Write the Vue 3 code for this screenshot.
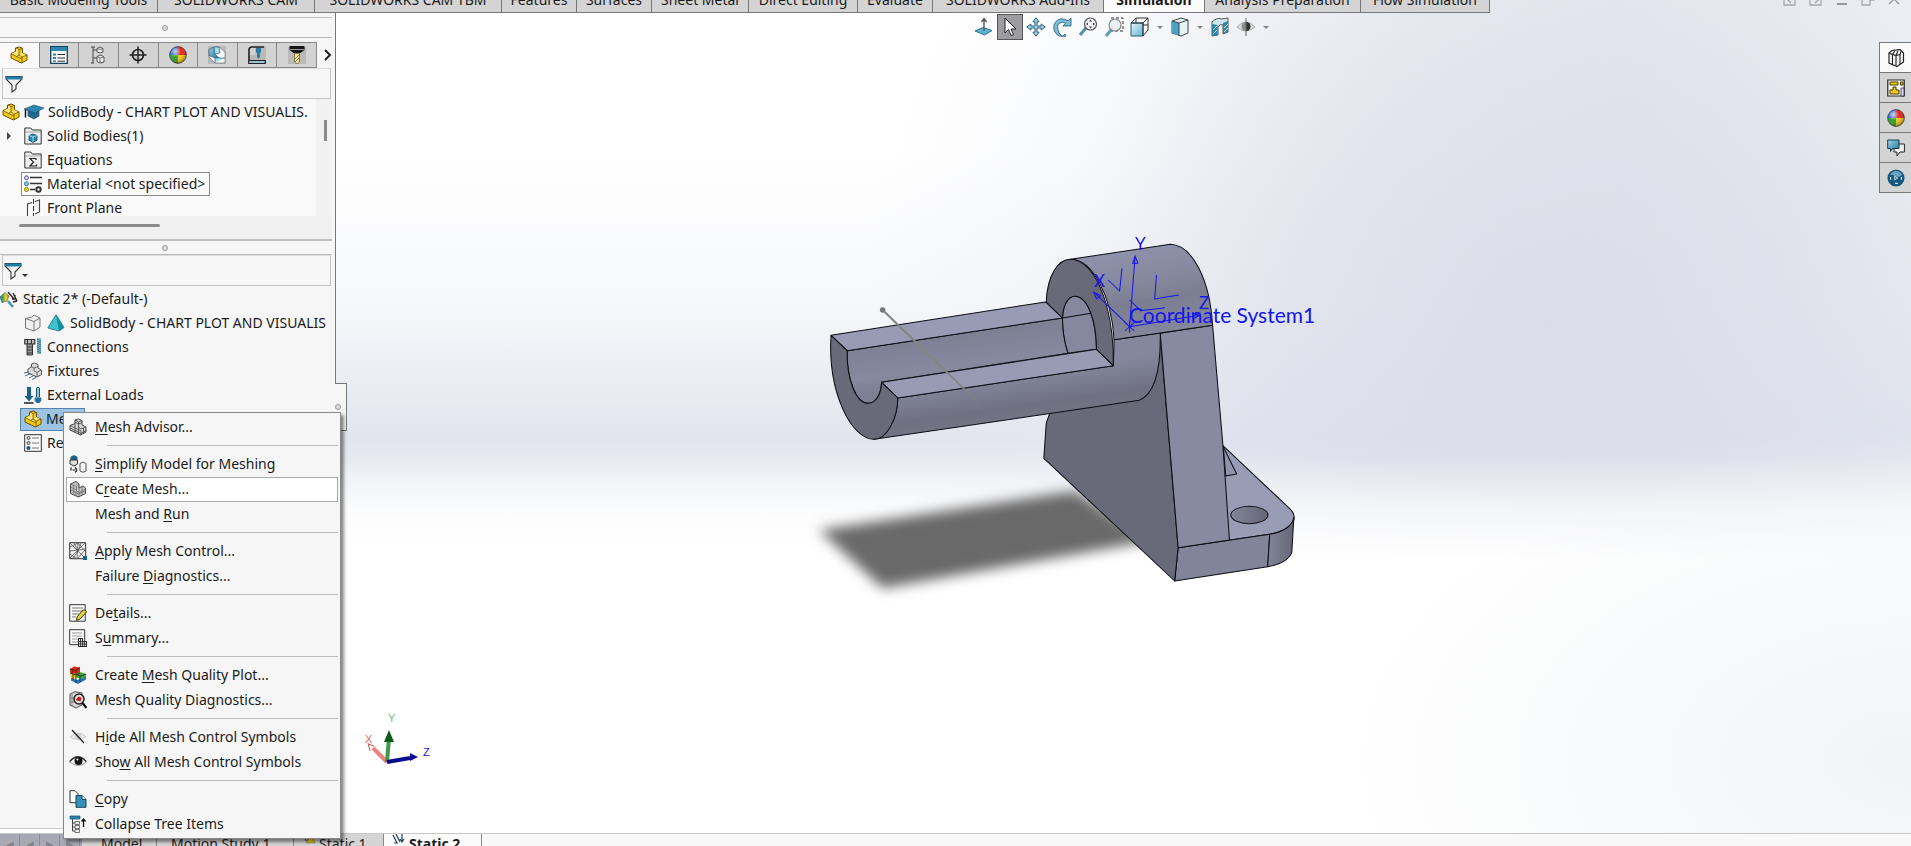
<script setup>
const ribbon = [
  'Basic Modeling Tools', 'SOLIDWORKS CAM', 'SOLIDWORKS CAM TBM', 'Features', 'Surfaces', 'Sheet Metal',
  'Direct Editing', 'Evaluate', 'SOLIDWORKS Add-Ins', 'Simulation', 'Analysis Preparation', 'Flow Simulation',
]
const managers = [
  ['part', 'Feature tree'], ['props', 'Properties'], ['config', 'Configurations'], ['target', 'Dimensions'],
  ['ball', 'Display'], ['camcube', 'CAM features'], ['machine', 'CAM operations'], ['tool', 'CAM tools'],
]
const hud = [
  ['normal', 'Normal to'], ['cursor', 'Select'], ['pan', 'Pan'], ['rotate', 'Rotate'], ['zoomfit', 'Zoom to fit'],
  ['zoomarea', 'Zoom to area'], ['orient', 'View orientation', true], ['style', 'Display style', true],
  ['section', 'Section view'], ['eye2', 'Hide or show items', true],
]
const windowButtons = [['winleft', 'Dock left'], ['winright', 'Dock right'], ['winmin', 'Minimize'], ['winrest', 'Restore'], ['winclose', 'Close']]
const taskPane = [['books', 'Design library'], ['palette', 'View palette'], ['ball', 'Appearances'], ['chat', 'Forum'], ['globe', 'Resources']]
const menu = [
  [['advisor', '', 'M', 'esh Advisor...']],
  [['simplify', '', 'S', 'implify Model for Meshing'], ['mesh', 'C', 'r', 'eate Mesh...'], ['', 'Mesh and ', 'R', 'un']],
  [['control', '', 'A', 'pply Mesh Control...'], ['', 'Failure ', 'D', 'iagnostics...']],
  [['details', 'De', 't', 'ails...'], ['summary', 'S', 'u', 'mmary...']],
  [['plot', 'Create ', 'M', 'esh Quality Plot...'], ['diag', 'Mesh Quality Dia', 'g', 'nostics...']],
  [['hide', 'H', 'i', 'de All Mesh Control Symbols'], ['show', 'Sho', 'w', ' All Mesh Control Symbols']],
  [['copy', '', 'C', 'opy'], ['collapse', 'Collapse Tree Items', '', '']],
]
</script>

<template>
  <div class="app">
    <svg class="defs" aria-hidden="true">
      <defs>
        <linearGradient id="gBlue" x1="0" y1="0" x2="1" y2="1"><stop offset="0" stop-color="#9fd3e8" /><stop offset="1" stop-color="#1f6f96" /></linearGradient>
        <linearGradient id="gPale" x1="0" y1="0" x2="1" y2="1"><stop offset="0" stop-color="#e8f6fb" /><stop offset="1" stop-color="#5fb3d0" /></linearGradient>
        <radialGradient id="gShine" cx=".35" cy=".3" r=".7"><stop offset="0" stop-color="#fff" stop-opacity=".75" /><stop offset=".5" stop-color="#fff" stop-opacity="0" /><stop offset="1" stop-color="#000" stop-opacity=".35" /></radialGradient>
        <linearGradient id="gRain" x1="0" y1="0" x2="1" y2="0"><stop offset="0" stop-color="#2f78c8" /><stop offset=".35" stop-color="#3fae4a" /><stop offset=".65" stop-color="#f3dc2c" /><stop offset="1" stop-color="#e4502a" /></linearGradient>
      </defs>
      <symbol id="i-part" viewBox="0 0 18 18">
        <path d="M1 7.500 5.500 5.500V2L9.500 1 12.500 2.500V7L17 9v5l-5.500 3L1 12z" fill="var(--pa,#f6c915)" stroke="var(--ps,#6e5200)" />
        <path d="M6 2 9 3.500V8.500L6 10 1.500 7.700 6 5.500zM9 8.500 12.500 7 16.500 9.200 12 11.500 6.500 10z" fill="var(--pb,#ffe678)" />
        <path d="M6 2 9 3.500 12.500 2.500M9 3.500V9l3 2 5-2M1 7.500 6.500 10.500 9 9M6.500 10.500 12 13V11M12 13v4" fill="none" stroke="var(--ps,#6e5200)" stroke-width=".8" />
      </symbol>
      <symbol id="i-props" viewBox="0 0 18 18"><path d="M.7.7h16.600v16.600H.7z" fill="#f4f8fa" stroke="#16435c" stroke-width="1.300" /><path d="M1 1h16v4H1z" fill="#2c86b0" /><path d="M3 7.500h3v2H3zm0 3.500h3v2H3zm0 3.500h3v1.500H3z" fill="#2c86b0" /><path d="M7.500 8.500H15M7.500 12H15M7.500 15.200H15" stroke="#333" /></symbol>
      <symbol id="i-config" viewBox="0 0 18 18"><path d="M1 1h4M3 1v16M1 17h3M3 4h4M3 12h4" stroke="#444" fill="none" /><path d="M7 2.500 10 1l3 1.500V6l-3 1-3-1zM7 10.500l4-1.500 3 2v5l-4 1-3-1.500z" fill="#eee" stroke="#555" /><path d="M7 10.500 10 12l4-1M10 12v5M7 2.500l3 1 3-1" stroke="#555" fill="none" stroke-width=".8" /></symbol>
      <symbol id="i-target" viewBox="0 0 18 18"><circle cx="9" cy="9" r="5.500" fill="none" stroke="#222" stroke-width="1.700" /><path d="M9 .5v17M.5 9h17" stroke="#222" stroke-width="1.500" /></symbol>
      <symbol id="i-ball" viewBox="0 0 18 18"><path d="M9 9V.6A8.400 8.400 0 0 1 17.400 9z" fill="#e0261c" /><path d="M9 9h8.400A8.400 8.400 0 0 1 9 17.400z" fill="#f4c61b" /><path d="M9 9v8.400A8.400 8.400 0 0 1 .6 9z" fill="#2ea12f" /><path d="M9 9H.6A8.400 8.400 0 0 1 9 .6z" fill="#2b62d9" /><circle cx="9" cy="9" r="8.400" fill="url(#gShine)" stroke="#333" stroke-width=".7" /></symbol>
      <symbol id="i-camcube" viewBox="0 0 18 18"><path d="M0 0h18v18H0z" fill="#b9b9b9" /><path d="M1 3.500 6 1h5l6 5v11H7l-6-6z" fill="#fff" stroke="#777" stroke-width=".8" /><path d="M1 3.500 6 1v6l5 5H7L1 9.500z" fill="url(#gBlue)" stroke="#35718c" stroke-width=".8" /><path d="M6 1h5l1 6-5 1zM7 17v-5h10" fill="#a9d9ec" stroke="#35718c" stroke-width=".8" /></symbol>
      <symbol id="i-machine" viewBox="0 0 18 18"><path d="M7 0h11v18H0V9h7z" fill="#b9b9b9" /><path d="M16 1H4Q1 1 1 4v10" fill="none" stroke="#222" stroke-width="1.600" /><path d="M8 2h5v4l-1 1v4l-1.500 2L9 11V7L8 6z" fill="#2a7ca5" /><path d="M.8 14.500h16.400v3H.8z" fill="#9cc3d5" stroke="#222" stroke-width="1.200" /></symbol>
      <symbol id="i-tool" viewBox="0 0 18 18"><path d="M0 1h18v17H0z" fill="#b9b9b9" /><path d="M1.500 0h15v4l-4 3h-7l-4-3z" fill="#151515" /><path d="M2 3.500h14" stroke="#bbb" stroke-width=".8" /><path d="M6.500 7.500h5V16l-2.500 2-2.500-2z" fill="#f0e3a2" stroke="#6d6330" stroke-width=".8" /><path d="m7 13 4-4M7 16l4-4" stroke="#8a7b3b" /></symbol>
      <symbol id="i-funnel" viewBox="0 0 18 18"><path d="M1 1.500h16V4l-6 6v4l-4 3v-7L1 4z" fill="#f3f3f3" stroke="#333" stroke-width="1.100" /><path d="M1 1.500h16V4.500H1.500z" fill="#1d7fa9" /></symbol>
      <symbol id="i-cap" viewBox="0 0 20 18"><path d="M4 7v6l6 3 5-3V7z" fill="#22688a" stroke="#173f54" stroke-width=".6" /><path d="M0 6 10 2l10 3-9 5z" fill="#2f86ab" stroke="#1a536e" stroke-width=".6" /><path d="M1.500 6.500v8" stroke="#111" stroke-width="1.500" /></symbol>
      <symbol id="i-folder" viewBox="0 0 18 18"><path d="M.8 3V1h6l1.500 2h8.900v14H.8z" fill="#f0f0f0" stroke="#333" /><path d="M1 5h16" stroke="#888" stroke-width=".7" /></symbol>
      <symbol id="i-bodies" viewBox="0 0 18 18"><use href="#i-folder" /><path d="M5 8.500 9 7l4 1.500v4.700L9 15.500l-4-2.300z" fill="#2a86b0" stroke="#0d4660" stroke-width=".8" /><path d="m5 8.500 4 1.500 4-1.500M9 10v5" stroke="#c8e7f3" stroke-width=".8" fill="none" /></symbol>
      <symbol id="i-sigma" viewBox="0 0 18 18"><use href="#i-folder" /><path d="M12 9V7.500H6l3.500 3.700L6 15h6.500v-1.500" fill="none" stroke="#222" stroke-width="1.200" /></symbol>
      <symbol id="i-material" viewBox="0 0 18 18"><path d="M6 2.500h12M6 8.500h12M6 14.500h5" stroke="#333" stroke-width="1.500" /><circle cx="2.500" cy="2.800" r="2" fill="#cfc8f0" stroke="#66609a" /><circle cx="2.500" cy="8.800" r="2" fill="#9fc7ef" stroke="#316aa0" /><circle cx="2.500" cy="14.500" r="2" fill="#f5da28" stroke="#8b7a14" /><circle cx="14.500" cy="14.500" r="2.200" fill="none" stroke="#333" stroke-width="2" /></symbol>
      <symbol id="i-plane" viewBox="0 0 18 18"><path d="M3.500 17V5L8 3.500M11 2.500 15.500 1v12L11 15" fill="none" stroke="#444" stroke-width="1.100" /><path d="M9.500 0v18" stroke="#333" stroke-dasharray="5 2" /></symbol>
      <symbol id="i-study" viewBox="0 0 18 18"><path d="M0 7 5 2.500 9 6 7 11 2 12.500z" fill="url(#gRain)" stroke="#555" stroke-width=".6" /><path d="m8 11 5 6" stroke="#4f94b4" stroke-width="2.600" /><path d="m8 2 6 7M13 3l4 8M12 9h3V5M13 12l4-1" stroke="#222" stroke-width="1.300" fill="none" /></symbol>
      <symbol id="i-solid" viewBox="0 0 18 18"><path d="M1.500 4.500 8 3l2-2 6 3v9l-6 4-8.500-3z" fill="#f0f0f0" stroke="#777" /><path d="m1.500 4.500 8.500 3 6-3.500M10 7.500V17" fill="none" stroke="#777" /></symbol>
      <symbol id="i-tet" viewBox="0 0 18 18"><path d="M9 .8 17 13.500 12 17 .8 14z" fill="#3cc4d2" stroke="#12717d" stroke-width=".8" /><path d="M9 .8 12 17 17 13.500z" fill="#178e9c" /></symbol>
      <symbol id="i-bolt" viewBox="0 0 18 18"><path d="M.8 1.500h10v4.500H.8z" fill="#bbb" stroke="#333" stroke-width="1.200" /><path d="M3 6h5.500v11H3z" fill="#999" /><path d="M3 6h5.500v11H3zM3 9h5M3 12h5M3 15h5M3.500 1.500V6M7.500 1.500V6" fill="none" stroke="#333" /><path d="M17 1h-4l4 2h-4l4 2h-4l4 2h-4l4 2h-4l4 2h-4l4 2h-4l4 2h-4" fill="none" stroke="#2b7898" /></symbol>
      <symbol id="i-fixture" viewBox="0 0 18 18"><path d="M4 7 7.500 5V2l3-1L14 2.500V6l3.500 2v4.500L13 15 4 11z" fill="#d9d9d9" stroke="#555" /><path d="M7.500 5 10 6v3l3 1.500L17 8M10 6l4-1.500M13 10.500V15" fill="none" stroke="#555" stroke-width=".8" /><path d="m0 11 5-1M1 14l6-2.500M5 16l5-2.500M8 17.500l4-2" stroke="#49718a" /></symbol>
      <symbol id="i-loads" viewBox="0 0 18 18"><path d="M3 1v9H.5L5 15.500l4.500-5.500H7V1z" fill="#1d6286" /><path d="M0 17h9.500" stroke="#222" stroke-width="1.500" /><path d="M12.500 2q1.500-1.800 3 0v9a3 3 0 1 1-3 0z" fill="#8fc3da" stroke="#1d5570" /><circle cx="14" cy="14" r="2.500" fill="#246f93" /></symbol>
      <symbol id="i-results" viewBox="0 0 18 18"><path d="M.7.7h16.600v16.600H.7z" fill="#f8f8f8" stroke="#333" /><path d="M8 4h7M8 9h7M8 14h7" stroke="#777" /><circle cx="4.500" cy="4" r="1.500" fill="#ccc" stroke="#555" /><circle cx="4.500" cy="9" r="1.500" fill="#ccc" stroke="#555" /><circle cx="4.500" cy="14" r="2" fill="#1e5370" /></symbol>
      <symbol id="i-advisor" viewBox="0 0 18 18"><path d="M1 7.500 6 5.500V2L9.500 1 13 2.500V7l4 2v5l-5.500 3L1 12z" fill="#d4d4d4" stroke="#444" /><path d="M6 2 9.500 4 13 2.500M9.500 4v5L12 11l5-2M1 7.500 12 13v4M6 5.500v9M9.500 9v7M1 10 12 15.500l5-3M14.500 10v5.500M6 4l3.500 2L13 4.500" fill="none" stroke="#444" stroke-width=".8" /></symbol>
      <symbol id="i-mesh" viewBox="0 0 18 18"><path d="M1.500 4 7 1.500 10 4v4l4-2 2.500 2v5.500L9.500 17l-8-3.500z" fill="#c4c4c4" stroke="#444" /><path d="m1.500 4 6 2.500V11l3 1.500 6-3.500M1.500 7l6 3M1.500 10l8 4 7-3.500M4.500 5.500V15M7 11v5M10 8v9M13 7v8M7.500 6.500 10 4" fill="none" stroke="#666" stroke-width=".7" /></symbol>
      <symbol id="i-simplify" viewBox="0 0 18 18"><path d="M1.500 2Q5-1.500 8.500 2v3h-7z" fill="#1d6286" /><path d="M1 5h7.500v4L5 11 1 9z" fill="#ddd" stroke="#333" /><path d="M11 8.500q3-3 6 0V16q-3 2.500-6 0z" fill="#f2f2f2" stroke="#555" /><path d="M2 12.500V15h6M6 12.500 8.500 15 6 17.500" fill="none" stroke="#111" stroke-width="1.200" stroke-dasharray="3 1" /></symbol>
      <symbol id="i-control" viewBox="0 0 18 18"><path d="M.7.7h16v16H.7z" fill="#eee" stroke="#333" /><path d="m1 1 16 16M16 1 1 16M9 1 8 17M1 9l16-2M1 5l8-4 7 8M1 12l7 5 8-9M5 1l4 8-5 7M12 1 9 9" fill="none" stroke="#555" stroke-width=".8" /><path d="M14 14h4v4h-4z" fill="#1d6286" /></symbol>
      <symbol id="i-details" viewBox="0 0 18 18"><path d="M.7.7h15.500v16.500H.7z" fill="#fafafa" stroke="#333" /><path d="M3 4h11M3 7h11M3 10h7M3 13h4" stroke="#777" /><path d="m8 13 6-7q3-.5 3.500 2L11 15l-3.500 1.500z" fill="#e8d13a" stroke="#453b0b" /></symbol>
      <symbol id="i-summary" viewBox="0 0 18 18"><path d="M.7.7h15v15H.7z" fill="#fafafa" stroke="#333" /><path d="M3 4h10M3 7h10M3 10h6M3 13h6" stroke="#999" /><path d="M9.500 9.500h4v3H17.500v5h-8z" fill="#ddd" stroke="#222" /><path d="M11.500 9.500v8M13.500 12v5.500M15.500 12v5.500M9.500 12.500h4M9.500 15h8" stroke="#222" stroke-width=".8" /></symbol>
      <symbol id="i-plot" viewBox="0 0 18 18"><path d="m1 3 4-2.500 6 1V7l-4 1-6-1z" fill="#df2718" /><path d="m11 6 6 2v4l-6 1-4-2V8z" fill="#37ad3b" /><path d="m1 7 6 1v6l-5-2z" fill="#f0c92b" /><path d="m2 12 6 2 9-3v2.500L9 18l-7-3.500z" fill="#2576c4" /><path d="m1 3 6 1.500 4-3M7 4.500V17M4 4v10M7 8l5 2 5-2M11 10v6M1 7l6 2 4-2" fill="none" stroke="#352b16" stroke-width=".9" /></symbol>
      <symbol id="i-diag" viewBox="0 0 18 18"><path d="M1 3 6 .7 13 2v12l-6 3-6-3z" fill="#d7d7d7" stroke="#555" /><path d="M3 2.500v13M1 7h5M1 11h5" stroke="#777" stroke-width=".8" /><circle cx="10" cy="8" r="5" fill="#f4dada" stroke="#222" stroke-width="1.500" /><path d="m6.500 9 3-3.500 3 1-1 4z" fill="#c11f24" /><path d="m13.500 12 4 5" stroke="#111" stroke-width="2.200" /></symbol>
      <symbol id="i-hide" viewBox="0 0 18 18"><path d="M1 9q8-8 16 0-8 5-16 0" fill="#ececec" stroke="#c8c8c8" /><circle cx="9" cy="8" r="3" fill="#d0d0d0" /><path d="m3 2 12 13" stroke="#222" stroke-width="1.300" /></symbol>
      <symbol id="i-show" viewBox="0 0 18 18"><path d="M.7 9q8-9 16.600 0-8 7-16.600 0" fill="#f8f8f8" stroke="#999" /><path d="M.7 8.500q8-9.500 16.600 0" fill="none" stroke="#333" stroke-width="1.300" /><circle cx="9.500" cy="8" r="4" fill="#141414" /><circle cx="8.500" cy="6.500" r="1" fill="#fff" /></symbol>
      <symbol id="i-copy" viewBox="0 0 18 18"><path d="M1 .7h5l3 3v9H1z" fill="#fff" stroke="#333" /><path d="M7 5.500h6l4 4v7.800H7z" fill="#3591b9" stroke="#16465c" /><path d="M13 5.500v4h4" fill="#cfe9f3" stroke="#16465c" /></symbol>
      <symbol id="i-collapse" viewBox="0 0 18 18"><path d="M1 1h10v3H1z" fill="#2a86b0" stroke="#174b63" stroke-width=".7" /><path d="M3.500 4v12H6M3.500 8H6M3.500 12H6" stroke="#444" fill="none" /><path d="M6 6.500h4.500v3H6zm0 4h4.500v3H6zm0 4h4.500v3H6z" fill="#eee" stroke="#555" stroke-width=".8" /><path d="M14.500 12V4M12.500 6.500l2-2.500 2 2.500" stroke="#111" stroke-width="1.300" fill="none" /></symbol>
      <symbol id="i-normal" viewBox="0 0 20 20"><path d="m1 14 8-3.500 9 3-7.500 4.500z" fill="#5fb3d0" stroke="#2b7593" /><path d="M10 14V2M7.500 5 10 1.500l2.500 3.500" fill="none" stroke="#555" stroke-width="1.400" /></symbol>
      <symbol id="i-cursor" viewBox="0 0 20 20"><path d="M5 1v15l3.500-3.500 2.500 6 2.500-1-2.500-5.500h5z" fill="#fff" stroke="#222" /></symbol>
      <symbol id="i-pan" viewBox="0 0 20 20"><path d="m10 .8 3 4h-2V9h4.200V7l4 3-4 3v-2H11v4.200h2l-3 4-3-4h2V11H4.800v2l-4-3 4-3v2H9V4.800H7z" fill="#a5d8ea" stroke="#2a5f78" /></symbol>
      <symbol id="i-rotate" viewBox="0 0 20 20"><path d="M19 1v8h-8l2.800-2.800Q10 4 7 6.500T7 15.500 13 17l1 2Q6 20.500 3 15T4 4.500 16 3.800z" fill="#7dbdd5" stroke="#2d6884" stroke-width=".9" /></symbol>
      <symbol id="i-zoomfit" viewBox="0 0 20 20"><path d="m2 18 6-7" stroke="#4d91ae" stroke-width="3" /><circle cx="12.500" cy="7" r="6" fill="#f5f5f5" stroke="#555" stroke-width="1.200" /><path d="M12.500 2.500 14 4.500h-3zm0 9 1.500-2h-3zM8 7l2-1.500v3zm9 0-2-1.500v3z" fill="#333" /></symbol>
      <symbol id="i-zoomarea" viewBox="0 0 20 20"><path d="M7 1h12v13H7z" fill="none" stroke="#333" stroke-dasharray="3 2" /><path d="m2 19 5-6" stroke="#5c9db8" stroke-width="3" /><circle cx="11" cy="8" r="6" fill="#e9eef0" stroke="#888" stroke-width="1.200" /></symbol>
      <symbol id="i-orient" viewBox="0 0 20 20"><path d="M1 6h12v13H1z" fill="url(#gPale)" stroke="#2b5870" /><path d="m1 6 5-5h12v12l-5 6V6H1M18 1l-5 5M6 1v5M18 8h-5" fill="none" stroke="#333" /></symbol>
      <symbol id="i-style" viewBox="0 0 20 20"><path d="M2 4 11 1l7 2v13l-7 3-9-3z" fill="#e6f3f7" stroke="#444" /><path d="m2 4 7 2v13l-7-3z" fill="#4ba2c3" /><path d="m2 4 7 2 9-3M9 6v12.500" fill="none" stroke="#444" /></symbol>
      <symbol id="i-section" viewBox="0 0 20 20"><path d="M2 5q5-5 9-3l7-1v14l-5 2V8q-3-2-5 2v8l-6 1z" fill="#cfe5ed" stroke="#555" /><path d="M2 7 7.500 8v10L2 19zM13 6l5-2v11l-5 2z" fill="#2a86aa" /><path d="m3 13 4-4M3 17l4-4M14 11l4-4M14 15l4-4" stroke="#d5edf5" /></symbol>
      <symbol id="i-eye2" viewBox="0 0 20 20"><path d="M1 10q9-10 18 0-9 8-18 0" fill="#dedede" stroke="#aaa" /><circle cx="10" cy="9.500" r="4.500" fill="#8a8a8a" /><path d="M10 5a4.500 4.500 0 0 1 0 9z" fill="#333" /><path d="M10 1v18" stroke="#666" /></symbol>
      <symbol id="i-books" viewBox="0 0 18 18"><path d="m2 4 3-2.500 8-1L16.500 4v9L10 17.500 2 14z" fill="#f4f4f4" stroke="#222" stroke-width="1.200" /><path d="M5.500 5.500v10M9 6.500v10M13 5.500v9.500M2 4l3.500 1.500L8 1.500M5.500 5.500 9 6.500l2-5M9 6.500l4-1 1-3" fill="none" stroke="#222" stroke-width="1.100" /></symbol>
      <symbol id="i-palette" viewBox="0 0 18 18"><path d="M.8 1h16.400v16H.8z" fill="#fff" stroke="#222" stroke-width="1.200" /><path d="M3 3h8v3H3zM13.500 3H16v3h-2.500zM6 8h3v3h3v4H3v-4h3z" fill="#f2cb1d" stroke="#443a05" /><path d="M14 9h3v8h-3z" fill="#d8dbee" stroke="#2a2f55" stroke-width=".8" /></symbol>
      <symbol id="i-chat" viewBox="0 0 18 18"><path d="M7 5h10.400v8H13l-3 4v-4H7z" fill="#f4f4f4" stroke="#222" /><path d="M.7 1H12v8.500H5.500l-2 3v-3H.7z" fill="url(#gBlue)" stroke="#103e54" /></symbol>
      <symbol id="i-globe" viewBox="0 0 20 20"><circle cx="10" cy="10" r="9.500" fill="#17577b" /><path d="M3 6q7-8 14 0-3 4-7 2T3 6" fill="#8fc4df" opacity=".7" /><path d="M8.500 8 12 10l-3.500 2z" fill="none" stroke="#d4ecf7" /><path d="M4 9v3M16 9v3M9 16h3" fill="none" stroke="#d4ecf7" stroke-width="1.300" /></symbol>
      <symbol id="i-winleft" viewBox="0 0 14 14"><path d="M1 1h11v11H1zM8 4 5 7l3 3" fill="none" stroke="#a3a8b0" stroke-width="1.300" /></symbol>
      <symbol id="i-winright" viewBox="0 0 14 14"><path d="M1 1h11v11H1zM6 4l3 3-3 3" fill="none" stroke="#a3a8b0" stroke-width="1.300" /></symbol>
      <symbol id="i-winmin" viewBox="0 0 14 14"><path d="M2 11h10" stroke="#9499a1" stroke-width="2" /></symbol>
      <symbol id="i-winrest" viewBox="0 0 14 14"><path d="M1 4h8v8H1zM5 3V1h8v6h-4" fill="none" stroke="#a3a8b0" stroke-width="1.300" /></symbol>
      <symbol id="i-winclose" viewBox="0 0 14 14"><path d="m2 1 10 10M12 1 2 11" stroke="#9499a1" stroke-width="1.300" /></symbol>
      <symbol id="i-arrows" viewBox="0 0 14 14"><path d="m1 1 4 8M4 0l4 8M2 9h4M10 0v7M8 5l2 3 2-3" fill="none" stroke="#1d4152" stroke-width="1.200" /></symbol>
      <symbol id="i-warn" viewBox="0 0 16 16"><path d="m1 2 4 6M4 1l4 7" stroke="#333" stroke-width="1.300" /><path d="m10 1 5 9H5z" fill="#f3d321" stroke="#7a6910" stroke-width=".7" /></symbol>
    </svg>

    <header class="top">
      <nav class="ribbon" aria-label="Command tabs">
        <button v-for="t in ribbon" :key="t" :class="{ on: t === 'Simulation' }">{{ t }}</button>
      </nav>
      <div class="win">
        <button v-for="[id, label] in windowButtons" :key="id" :aria-label="label"><svg><use :href="'#i-' + id" /></svg></button>
      </div>
    </header>

    <main class="body">
      <aside class="panel">
        <div class="grip first"><i class="dot"></i></div>
        <div class="mgr">
          <button v-for="([id, label], n) in managers" :key="label" :class="{ on: n === 0 }" :aria-label="label"><svg><use :href="'#i-' + id" /></svg></button>
          <button class="more" aria-label="More tabs"><svg viewBox="0 0 8 14"><path d="m1 2 5 5-5 5" fill="none" stroke="#222" stroke-width="2" /></svg></button>
        </div>
        <label class="filter"><svg class="ico"><use href="#i-funnel" /></svg><input type="text" aria-label="Filter features"></label>
        <div class="scroll">
          <ul class="tree feat">
            <li class="root"><svg class="ico"><use href="#i-part" /></svg><svg class="ico wide"><use href="#i-cap" /></svg><span>SolidBody - CHART PLOT AND VISUALIS.</span></li>
            <li><i class="tri"></i><svg class="ico"><use href="#i-bodies" /></svg><span>Solid Bodies(1)</span></li>
            <li><svg class="ico"><use href="#i-sigma" /></svg><span>Equations</span></li>
            <li><div class="boxed"><svg class="ico"><use href="#i-material" /></svg><span>Material &lt;not specified&gt;</span></div></li>
            <li><svg class="ico"><use href="#i-plane" /></svg><span>Front Plane</span></li>
          </ul>
          <div class="vbar"><i></i></div>
        </div>
        <div class="hbar"><i></i></div>
        <div class="grip"><i class="dot"></i></div>
        <label class="filter second"><svg class="ico"><use href="#i-funnel" /></svg><i class="caret"></i><input type="text" aria-label="Filter study"></label>
        <ul class="tree study">
          <li class="root"><svg class="ico"><use href="#i-study" /></svg><span>Static 2* (-Default-)</span></li>
          <li><svg class="ico"><use href="#i-solid" /></svg><svg class="ico"><use href="#i-tet" /></svg><span>SolidBody - CHART PLOT AND VISUALIS</span></li>
          <li><svg class="ico"><use href="#i-bolt" /></svg><span>Connections</span></li>
          <li><svg class="ico"><use href="#i-fixture" /></svg><span>Fixtures</span></li>
          <li><svg class="ico"><use href="#i-loads" /></svg><span>External Loads</span></li>
          <li><div class="boxed picked"><svg class="ico"><use href="#i-part" /></svg><span>Mesh</span></div></li>
          <li><svg class="ico"><use href="#i-results" /></svg><span>Results</span></li>
        </ul>
        <div class="sash"><i class="dot"></i></div>
      </aside>

      <section class="view">
        <div class="hud">
          <template v-for="[id, label, drop] in hud" :key="id">
            <button :class="{ on: id === 'cursor' }" :aria-label="label"><svg><use :href="'#i-' + id" /></svg></button>
            <button v-if="drop" class="drop" :aria-label="label + ' options'"><i class="caret"></i></button>
          </template>
        </div>

        <svg class="model" viewBox="0 0 1568 1140" preserveAspectRatio="none">
          <defs>
            <filter id="soft" x="-20%" y="-20%" width="140%" height="140%"><feGaussianBlur stdDeviation="19" /></filter>
            <linearGradient id="tube" gradientUnits="userSpaceOnUse" x1="600" y1="430" x2="625" y2="605"><stop offset=".2" stop-color="#85889d" /><stop offset=".75" stop-color="#6f7182" /><stop offset="1" stop-color="#737584" /></linearGradient>
            <linearGradient id="trough" gradientUnits="userSpaceOnUse" x1="450" y1="340" x2="470" y2="480"><stop offset="0" stop-color="#7d8093" /><stop offset=".7" stop-color="#878a9f" /><stop offset="1" stop-color="#7d8094" /></linearGradient>
            <linearGradient id="hub" gradientUnits="userSpaceOnUse" x1="960" y1="90" x2="1010" y2="350"><stop offset="0" stop-color="#8e91aa" /><stop offset=".4" stop-color="#85889c" /><stop offset=".6" stop-color="#7b7e90" /><stop offset="1" stop-color="#85889c" /></linearGradient>
            <linearGradient id="corner"><stop offset="0" stop-color="#82859a" /><stop offset="1" stop-color="#656775" /></linearGradient>
            <linearGradient id="fade" gradientUnits="userSpaceOnUse" x1="240" y1="270" x2="520" y2="550"><stop offset=".8" stop-color="#85857f" /><stop offset="1" stop-color="#85857f" stop-opacity="0" /></linearGradient>
          </defs>
          <path d="M55 930 800 812 1020 962 240 1105z" fill="#696969" filter="url(#soft)" />
          <g stroke="#0b0c14" stroke-width="3" stroke-linejoin="round">
            <path d="M1228 677 1422 866Q1440 884 1433 903 1415 935 1362 943L1098 983 1100 680z" fill="#999cb5" />
            <path d="M1098 983 1364 943 1358 1040 1088 1083z" fill="#82859a" />
            <path d="M1364 943Q1428 930 1434 892L1428 998Q1415 1030 1358 1040z" fill="url(#corner)" />
            <ellipse cx="1305" cy="885" rx="54" ry="26" fill="url(#corner)" />
            <path d="m1229 680 39 82-32 6z" fill="#8f92aa" />
            <path d="M725 580 715 610 708 715 1088 1083 1098 983 1046 345 900 500z" fill="#686a79" />
            <path d="m1046 340 152-24 30 360 19 284-149 23z" fill="#878aa0" />
            <path d="m912 359 134-20C1048 440 1035 520 985 541L215 658C250 645 283 600 284 534L910 437z" fill="url(#tube)" />
            <path d="M785 118 1075 73C1140 75 1190 180 1198 316L912 359C905 230 850 118 785 118z" fill="url(#hub)" />
            <path d="M762 294C764 255 778 229 798 229 835 229 860 300 861 388L778 400Q762 350 762 294z" fill="#85889e" />
            <path d="m762 294 83-14" fill="none" />
            <path d="M137 392 762 294Q762 350 778 400L237 487C235 525 220 550 198 550 160 550 135 470 137 392z" fill="url(#trough)" />
            <path d="M90 346 713 246 762 294 137 392zM237 487 861 388 910 437 284 534z" fill="#999bb4" />
            <path d="M715 246C718 165 750 118 785 118 850 118 911 240 910 437L861 388C860 300 835 229 798 229 778 229 764 255 762 294z" fill="#686a79" />
            <path d="M90 346 137 392C135 470 160 550 198 550 220 550 235 525 237 487L284 534C283 600 250 658 215 658 150 658 80 520 90 346z" fill="#686a79" />
          </g>
          <path d="M240 270 520 550" stroke="url(#fade)" stroke-width="6" /><circle cx="240" cy="270" r="8" fill="#777" />
          <g fill="none" stroke="#1515ee" stroke-width="3">
            <path d="M957 320 973 110M957 320 855 218M957 320 1158 286M966 130l7-22 8 22zM853 217l8 20 12-10zM1140 280l20 6-18 10zM943 307l28 26M943 333l28-26M957 302v36M895 180l33 33 7-68M1035 165l-5 72 70-12M957 240l33 32 70-9" />
          </g>
        </svg>
        <svg class="labels" viewBox="0 0 240 110">
          <text x="43" y="15">Y</text><text x="2" y="52">X</text><text x="107" y="74">Z</text>
          <text class="cs" x="37" y="88">Coordinate System1</text>
        </svg>
        <svg class="triad" viewBox="0 0 80 60">
          <path d="m27 50-14-14" stroke="#f08080" stroke-width="4" /><path d="m8 31 2 8M8 32l6 2" stroke="#c55" />
          <path d="m27 50 2-24" stroke="#3d9a4d" stroke-width="4" /><path d="m29 18 5 12H24z" fill="#0b5c18" />
          <path d="m27 50 23-4" stroke="#0b0b8f" stroke-width="4" /><path d="m58 45-8-4v8z" fill="#0b0b8f" />
          <text x="28" y="10" fill="#79b87d">Y</text><text x="5" y="31" fill="#e06b6b">X</text><text x="63" y="44" fill="#2020c8">Z</text>
        </svg>
        <nav class="task" aria-label="Task pane">
          <button v-for="([id, label], n) in taskPane" :key="id" :class="{ on: n === 0 }" :aria-label="label"><svg><use :href="'#i-' + id" /></svg></button>
        </nav>
      </section>
    </main>

    <footer class="bottom">
      <div class="steps"><button aria-label="First">◀</button><button aria-label="Previous">◀</button><button aria-label="Next">▶</button><button aria-label="Last">▶</button></div>
      <button class="tab model-tab">Model</button>
      <button class="tab motion">Motion Study 1</button>
      <button class="tab static"><svg><use href="#i-warn" /></svg>Static 1</button>
      <button class="tab static on"><svg><use href="#i-arrows" /></svg>Static 2</button>
    </footer>

    <div class="menu" role="menu">
      <div v-for="(group, g) in menu" :key="g" class="group">
        <button v-for="item in group" :key="item.join('')" role="menuitem" :class="{ hot: item[0] === 'mesh' }">
          <svg class="ico"><use v-if="item[0]" :href="'#i-' + item[0]" /></svg>
          <span>{{ item[1] }}<u>{{ item[2] }}</u>{{ item[3] }}</span>
        </button>
      </div>
    </div>
  </div>
</template>

<style>
html, body { margin: 0; }
</style>

<style scoped>
* { box-sizing: border-box; }
.app {
  position: relative;
  display: flex;
  flex-direction: column;
  height: 100vh;
  overflow: hidden;
  font: 14px/24px "Noto Sans", "Open Sans", sans-serif;
  color: #1a1a1a;
  background:
    radial-gradient(ellipse 30% 40% at 100% 90%, rgba(238, 241, 244, .8), transparent),
    linear-gradient(180deg, transparent 54%, rgba(255, 255, 255, .65) 60%, #fff 66%),
    radial-gradient(ellipse 36% 80% at 81% 38%, rgba(217, 220, 231, .9), rgba(220, 223, 234, .7) 38%, rgba(232, 235, 243, .3) 72%, transparent),
    linear-gradient(180deg, transparent 18%, rgba(222, 226, 237, .25) 36%, rgba(220, 224, 235, .85) 52%, rgba(226, 230, 239, .7) 56%, transparent 66%),
    linear-gradient(90deg, transparent 58%, #e9ecf0 85%, #edf0f3 100%),
    #fff;
}
button { font: inherit; color: inherit; border: 0; padding: 0; background: none; }
ul { list-style: none; margin: 0; padding: 0; }
svg { display: block; flex: none; }
.defs { position: absolute; width: 0; height: 0; }
.ico { width: 18px; height: 18px; }
.wide { width: 20px; }

.top { display: flex; justify-content: space-between; height: 13px; flex: none; overflow: hidden; }
.ribbon { display: grid; grid-template-columns: 158px 157px 187px 75px 75px 97px 109px 75px 171px 101px 156px 129px; border-bottom: 1px solid #777; }
.ribbon button { display: flex; align-items: flex-end; justify-content: center; height: 12px; border-right: 1px solid #777; background: #d4d4d4; line-height: 24px; white-space: nowrap; overflow: hidden; }
.ribbon .on { background: #fbfbfb; font-weight: 700; }
.win { display: flex; gap: 12px; align-items: flex-end; height: 7px; margin-right: 10px; }
.win svg { width: 14px; height: 14px; }

.body { display: flex; flex: 1; min-height: 0; }
.panel { position: relative; width: 336px; flex: none; display: flex; flex-direction: column; padding-right: 3px; margin-bottom: 4px; background: #f6f6f6; border-right: 1px solid #777; border-bottom: 1px solid #ccc; }
.grip { height: 16px; display: grid; place-items: center; border-top: 2px solid #bfbfbf; border-bottom: 1px solid #bbb; padding-right: 2px; }
.grip.first { height: 21px; margin: 4px 0; border-top-width: 1px; }
.dot { width: 6px; height: 6px; border: 1px solid #999; border-radius: 50%; background: #ddd; }
.mgr { display: flex; height: 26px; }
.mgr button { flex: 1; display: grid; place-items: center; background: #d3d3d3; border: 1px solid #888; border-left: 0; }
.mgr .on { background: #f9f9f9; border-bottom-color: transparent; border-top-color: #aaa; }
.mgr .more { flex: 0 0 15px; background: none; border: 0; place-items: center end; }
.mgr svg { width: 18px; height: 18px; }
.mgr .more svg { width: 8px; height: 14px; }
.filter { display: flex; align-items: center; height: 31px; margin: 0 1px 0 2px; padding-left: 2px; border: 1px solid #c4c4c4; border-top-color: #ddd; }
.filter.second { padding-left: 1px; }
.filter input { flex: 1; min-width: 0; border: 0; outline: 0; background: none; }
.caret { width: 0; height: 0; border: 3px solid transparent; border-top-color: #333; border-bottom: 0; }
.filter .caret { align-self: flex-end; margin: 0 0 8px; }
.scroll { display: flex; height: 117px; overflow: hidden; }
.tree li { position: relative; display: flex; align-items: center; gap: 5px; height: 24px; padding-left: 24px; white-space: nowrap; }
.tree .root { padding-left: 2px; gap: 4px; }
.feat { flex: 1; overflow: hidden; padding-top: 1px; background: #f9f9f9; }
.tri { position: absolute; left: 7px; border: 4px solid transparent; border-left-color: #444; border-right: 0; }
.vbar { width: 16px; background: #f1f1f1; }
.vbar i { display: block; width: 3px; height: 21px; margin: 21px 8px; background: #8a8a8a; }
.hbar { height: 23px; padding: 8px 19px; background: #f0f0f0; }
.hbar i { display: block; width: 141px; height: 3px; border-radius: 2px; background: #8a8a8a; }
.boxed { display: flex; align-items: center; gap: 5px; height: 24px; margin-left: -3px; padding: 0 4px 0 2px; border: 1px solid #888; background: #fbfbfb; }
.study { flex: 1; overflow: hidden; padding-top: 1px; }
.study .root { padding-left: 0; gap: 5px; }
.picked { width: 65px; height: 23px; margin-left: -4px; padding-left: 3px; background: #9cc3e4; border-color: #5484ad; gap: 4px; }
.sash { position: absolute; left: 335px; top: 370px; width: 12px; height: 48px; display: grid; place-items: center start; background: #f6f6f6; border: 1px solid #777; border-left: 0; }

.view { position: relative; flex: 1; min-width: 0; }
.hud { display: flex; justify-content: center; align-items: center; padding: 1px 4px 0 0; }
.hud button { width: 26px; height: 26px; display: grid; place-items: center; }
.hud .drop { width: 14px; }
.hud .on { background: #9d9da1; border: 1px solid #555; }
.hud svg { width: 20px; height: 20px; }
.hud .caret { border-top-color: #888; }
.model { position: absolute; left: 464px; top: 207px; width: 540px; height: 380px; overflow: visible; }
.labels { position: absolute; left: 756px; top: 222px; width: 240px; height: 110px; font: 17px Lato, sans-serif; fill: #1515ee; }
.labels .cs { font-size: 21px; }
.triad { position: absolute; left: 24px; bottom: 61px; width: 80px; height: 60px; font: 11px "Liberation Sans", sans-serif; }
.task { position: absolute; right: 0; top: 29px; width: 32px; border: 1px solid #777; border-width: 1px 0 0 1px; }
.task button { display: grid; place-items: center; width: 100%; height: 30px; background: #d4d4d4; border-bottom: 1px solid #777; }
.task .on { background: #fafafa; }
.task svg { width: 18px; height: 18px; }

.bottom { display: flex; height: 13px; flex: none; overflow: hidden; background: #f8f8f8; border-top: 1px solid #c8c8c8; }
.steps { display: flex; width: 82px; background: #a9a9b6; }
.steps button { width: 20px; height: 20px; border-right: 1px solid #8b8b98; font-size: 10px; line-height: 18px; color: #84848f; }
.tab { display: flex; align-items: flex-start; gap: 3px; height: 24px; background: #d4d4d4; border-right: 1px solid #888; line-height: 20px; white-space: nowrap; }
.tab svg { width: 14px; height: 14px; }
.model-tab { width: 75px; padding-left: 19px; }
.motion { width: 137px; padding-left: 14px; }
.static { width: 90px; padding-left: 8px; }
.tab.on { width: 98px; background: #fbfbfb; font-weight: 700; }

.menu { position: absolute; left: 63px; top: 412px; width: 278px; padding: 2px 2px 1px; background: #f6f6f6; border: 1px solid #888; box-shadow: 3px 3px 3px rgba(0, 0, 0, .45); }
.group + .group { padding-top: 12px; position: relative; }
.group + .group::before { content: ""; position: absolute; top: 5px; left: 41px; right: 0; border-top: 1px solid #bdbdbd; }
.menu button { display: flex; align-items: center; gap: 8px; width: 100%; height: 25px; padding: 0 0 2px 2px; border: 1px solid transparent; white-space: nowrap; }
.menu .hot { background: #fff; border-color: #aaa; }
.menu u { text-underline-offset: 2px; }
</style>
